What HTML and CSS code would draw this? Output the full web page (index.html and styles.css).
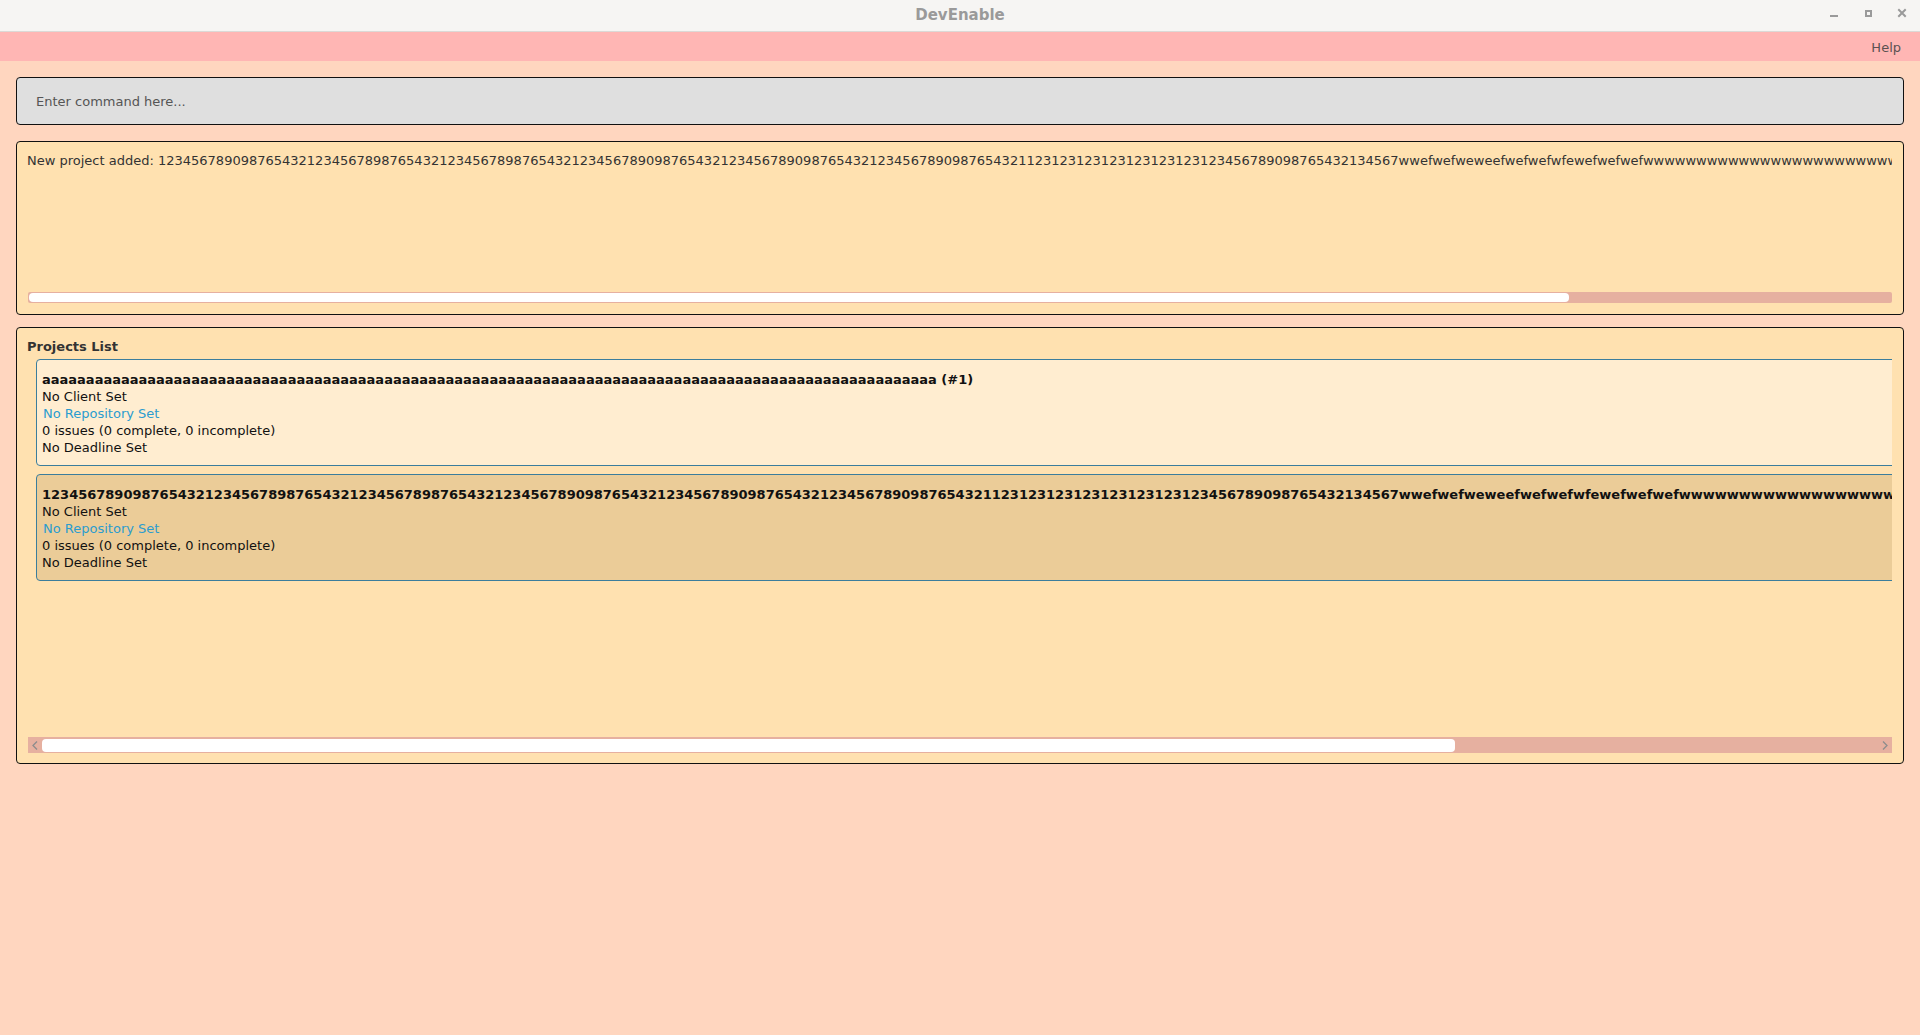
FILE: index.html
```html
<!DOCTYPE html>
<html lang="en">
<head>
<meta charset="utf-8">
<title>DevEnable</title>
<link rel="stylesheet" href="styles.css">
</head>
<body>
<div class="titlebar">
  <div></div>
  <div class="title">DevEnable</div>
  <div class="controls">
    <svg width="90" height="31" viewBox="0 0 90 31">
      <rect x="5" y="15" width="8" height="2" fill="#9a9a9a"/>
      <rect x="41" y="11" width="5" height="5" fill="none" stroke="#9a9a9a" stroke-width="2"/>
      <path d="M74 10 L80 16 M80 10 L74 16" stroke="#9a9a9a" stroke-width="2" stroke-linecap="square"/>
    </svg>
  </div>
</div>
<div class="menubar"><span class="menu-item">Help</span></div>
<main class="main">
  <div class="command">Enter command here...</div>
  <section class="results">
    <div class="results-text">New project added: 123456789098765432123456789876543212345678987654321234567890987654321234567890987654321234567890987654321123123123123123123123123456789098765432134567wwefwefweweefwefwefwfewefwefwefwwwwwwwwwwwwwwwwwwwwwwwwwwwwwwwwwwwwwwwwwwwwwwwwwwwwwwwwwwwwwwww</div>
    <div class="hscroll-small"><div class="thumb-small"></div></div>
  </section>
  <section class="projects">
    <div class="projects-label">Projects List</div>
    <div class="list">
      <div class="list-inner">
        <div class="card">
          <div class="card-title">aaaaaaaaaaaaaaaaaaaaaaaaaaaaaaaaaaaaaaaaaaaaaaaaaaaaaaaaaaaaaaaaaaaaaaaaaaaaaaaaaaaaaaaaaaaaaaaaaaaaaa (#1)</div>
          <div class="card-line">No Client Set</div>
          <div class="card-line link">No Repository Set</div>
          <div class="card-line">0 issues (0 complete, 0 incomplete)</div>
          <div class="card-line">No Deadline Set</div>
        </div>
        <div class="card selected">
          <div class="card-title">123456789098765432123456789876543212345678987654321234567890987654321234567890987654321234567890987654321123123123123123123123123456789098765432134567wwefwefweweefwefwefwfewefwefwefwwwwwwwwwwwwwwwwwwwwwwwwwwwwwwwwwwwwwwwwwwwwwwwwww (#2)</div>
          <div class="card-line">No Client Set</div>
          <div class="card-line link">No Repository Set</div>
          <div class="card-line">0 issues (0 complete, 0 incomplete)</div>
          <div class="card-line">No Deadline Set</div>
        </div>
      </div>
    </div>
    <div class="hscroll">
      <div class="arrow-btn">
        <svg width="6" height="9" viewBox="0 0 6 9"><path d="M5 0.5 L1 4.5 L5 8.5" fill="none" stroke="#8c8c8c" stroke-width="1.3"/></svg>
      </div>
      <div class="track">
        <div class="thumb"></div>
      </div>
      <div class="arrow-btn">
        <svg width="6" height="9" viewBox="0 0 6 9"><path d="M1 0.5 L5 4.5 L1 8.5" fill="none" stroke="#8c8c8c" stroke-width="1.3"/></svg>
      </div>
    </div>
  </section>
</main>
</body>
</html>
```

FILE: styles.css
```css
* {
  box-sizing: border-box;
}

html, body {
  margin: 0;
  padding: 0;
}

body {
  background: #ffd6bf;
  font-family: "DejaVu Sans", sans-serif;
  font-size: 13px;
  line-height: 17px;
  color: #111;
  width: 1920px;
  height: 1035px;
  overflow: hidden;
}

.titlebar {
  height: 32px;
  background: #f6f5f3;
  border-bottom: 1px solid #dcd9d6;
  display: grid;
  grid-template-columns: 1fr auto 1fr;
  align-items: start;
}

.title {
  font-weight: bold;
  font-size: 15px;
  line-height: 18px;
  color: #9a9a9a;
  padding-top: 6px;
}

.controls {
  justify-self: end;
  display: flex;
  margin-right: 5px;
}

.menubar {
  height: 29px;
  background: #ffb6b4;
  display: flex;
  justify-content: flex-end;
  padding: 7px 19px 0 0;
}

.menu-item {
  color: #5a5252;
}

.main {
  padding: 0 16px;
  display: flex;
  flex-direction: column;
}

.command {
  margin-top: 16px;
  height: 48px;
  border: 1px solid #111;
  border-radius: 4px;
  background: #dfdfdf;
  display: flex;
  align-items: center;
  padding-left: 19px;
  color: #555;
}

.results {
  margin-top: 16px;
  height: 174px;
  border: 1px solid #111;
  border-radius: 4px;
  background: #ffe1b0;
  padding: 10px 11px 11px 10px;
  display: flex;
  flex-direction: column;
  justify-content: space-between;
}

.results-text {
  color: #333;
  white-space: nowrap;
  overflow: hidden;
}

.hscroll-small {
  margin-left: 1px;
  height: 11px;
  background: #e6b0a0;
  border-radius: 2px;
  padding: 1px;
}

.thumb-small {
  width: 1540px;
  height: 9px;
  background: #ffffff;
  border-radius: 4px;
}

.projects {
  margin-top: 12px;
  height: 437px;
  border: 1px solid #111;
  border-radius: 4px;
  background: #ffe1b0;
  padding: 10px 11px 10px 10px;
  display: flex;
  flex-direction: column;
}

.projects-label {
  font-weight: bold;
  color: #333;
}

.list {
  flex: 1;
  overflow: hidden;
  margin-left: 1px;
}

.list-inner {
  display: grid;
  width: max-content;
  gap: 8px;
  padding: 4px 0 0 8px;
}

.card {
  background: #ffedd0;
  border: 1px solid #3b7d9c;
  border-radius: 4px;
  padding: 12px 12px 9px 5px;
}

.card.selected {
  background: #ebcc98;
}

.card-title {
  font-weight: bold;
  white-space: nowrap;
  line-height: 16px;
}

.card-line {
  white-space: nowrap;
  line-height: 17px;
}

.card-line.link {
  color: #2b9ccf;
  padding-left: 1px;
}

.hscroll {
  margin-left: 1px;
  height: 16px;
  background: #e6b0a0;
  display: flex;
  align-items: stretch;
}

.arrow-btn {
  width: 14px;
  display: flex;
  align-items: center;
  justify-content: center;
}

.track {
  flex: 1;
  padding: 2px 0 1px 0;
}

.thumb {
  width: 1413px;
  height: 13px;
  background: #ffffff;
  border-radius: 4px;
}
```
